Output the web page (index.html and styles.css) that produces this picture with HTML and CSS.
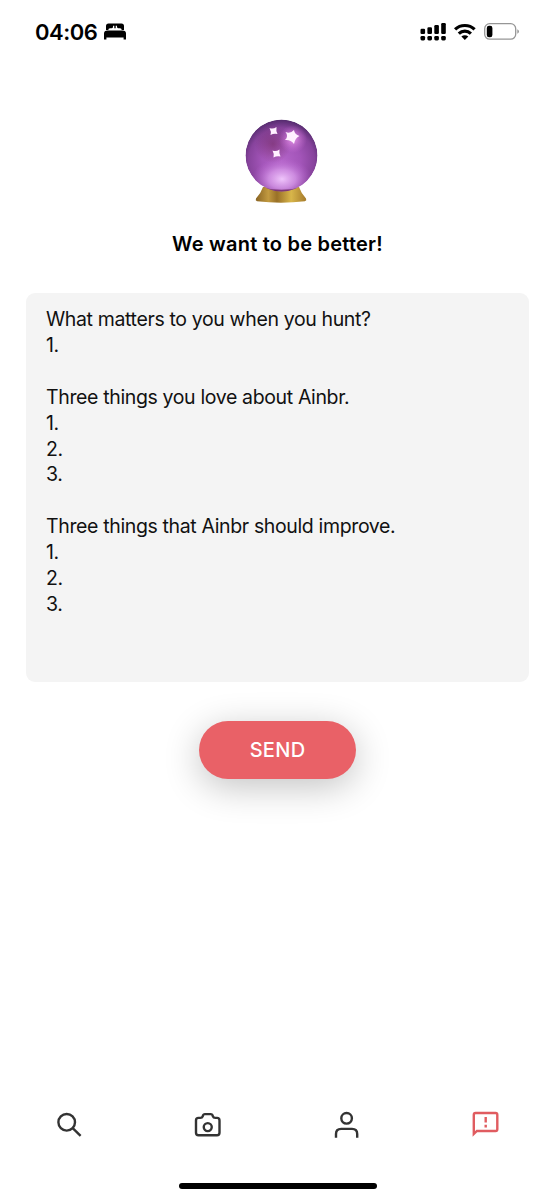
FILE: index.html
```html
<!DOCTYPE html>
<html lang="en">
<head>
<meta charset="utf-8">
<meta name="viewport" content="width=device-width, initial-scale=1">
<title>Feedback</title>
<link rel="stylesheet" href="styles.css">
</head>
<body>
<div class="screen">
  <header class="status">
    <div class="status-left">
      <span class="clock">04:06</span>
      <svg class="bed" width="24" height="20" viewBox="0 0 24 20">
        <path d="M3 8V4Q3 1.500 5.500 1.500H18.500Q21 1.500 21 4V8H18.700Q18.700 6.300 17 6.300H15.500Q14 6.300 14 4.800V3.800H12.700V6.300H11.300V3.800H10V4.800Q10 6.300 8.500 6.300H7Q5.300 6.300 5.300 8Z"/>
        <path d="M4.500 8.500H19.500Q23 8.500 23 11.500V17.500H20.600V15.500H3.400V17.500H1V11.500Q1 8.500 4.500 8.500Z"/>
      </svg>
    </div>
    <div class="status-right">
      <svg width="100" height="24" viewBox="0 0 100 24">
        <g>
          <rect x="0.500" y="8.700" width="4.600" height="5.200" rx="1.200"/>
          <rect x="7.400" y="7.200" width="4.600" height="6.700" rx="1.200"/>
          <rect x="14.300" y="5" width="4.600" height="8.900" rx="1.200"/>
          <rect x="21.200" y="3" width="4.600" height="10.900" rx="1.200"/>
          <rect x="0.500" y="15.900" width="4.600" height="4.600" rx="1.400"/>
          <rect x="7.400" y="15.900" width="4.600" height="4.600" rx="1.400"/>
          <rect x="14.300" y="15.900" width="4.600" height="4.600" rx="1.400"/>
          <rect x="21.200" y="15.900" width="4.600" height="4.600" rx="1.400"/>
        </g>
        <g fill="none" stroke="#000" stroke-width="3.200">
          <path d="M35.100 9.400C40.500 4.200 49.200 4.200 54.600 9.400"/>
          <path d="M38.800 13.600C42.300 10.300 47.400 10.300 50.900 13.600"/>
        </g>
        <path d="M41.400 16.500C43.400 14.800 46.300 14.800 48.300 16.500L44.850 20Z"/>
        <rect x="64.700" y="3.700" width="31" height="15.500" rx="5" fill="none" stroke="#969696" stroke-width="1.300"/>
        <path d="M97.300 9.200Q99 10 99 11.500T97.300 13.800Z" fill="#969696"/>
        <rect x="66.800" y="5.700" width="5.600" height="11.500" rx="2.200"/>
      </svg>
    </div>
  </header>

  <main class="content">
    <svg class="crystal" width="76" height="88" viewBox="0 0 76 88">
      <defs>
        <clipPath id="ball"><circle cx="37.500" cy="36.500" r="36"/></clipPath>
        <radialGradient id="glass" cx="50%" cy="58%" r="59%">
          <stop offset="0" stop-color="#b465c9"/>
          <stop offset="0.450" stop-color="#a355b9"/>
          <stop offset="0.780" stop-color="#87439c"/>
          <stop offset="1" stop-color="#4e2868"/>
        </radialGradient>
        <radialGradient id="glow" cx="50%" cy="50%" r="50%">
          <stop offset="0" stop-color="#efc5fb"/>
          <stop offset="0.450" stop-color="#d798e9" stop-opacity="0.800"/>
          <stop offset="1" stop-color="#b765d0" stop-opacity="0"/>
        </radialGradient>
        <radialGradient id="shade">
          <stop offset="0" stop-color="#68224f" stop-opacity="0.500"/>
          <stop offset="1" stop-color="#68224f" stop-opacity="0"/>
        </radialGradient>
        <radialGradient id="shine">
          <stop offset="0" stop-color="#ed9dec" stop-opacity="0.900"/>
          <stop offset="1" stop-color="#cf71d8" stop-opacity="0"/>
        </radialGradient>
        <linearGradient id="gold">
          <stop offset="0" stop-color="#886322"/>
          <stop offset="0.250" stop-color="#c29a40"/>
          <stop offset="0.420" stop-color="#997027"/>
          <stop offset="0.700" stop-color="#d8b64a"/>
          <stop offset="1" stop-color="#a57a2b"/>
        </linearGradient>
      </defs>
      <path d="M19 68Q17 74 12 79.500Q11 81.500 13 82.300Q37 85 61 82.300Q63 81.500 62 79.500Q57 74 55 68Z" fill="url(#gold)"/>
      <g clip-path="url(#ball)">
        <circle cx="37.500" cy="36.500" r="36" fill="url(#glass)"/>
        <ellipse cx="29" cy="25" rx="18" ry="19" fill="url(#shade)"/>
        <ellipse cx="38" cy="60" rx="30" ry="21" fill="url(#glow)"/>
        <circle cx="49" cy="20" r="14" fill="url(#shine)"/>
        <path d="M18 68.500Q37.500 73 57 68.500V74H18Z" fill="#6d2862" opacity="0.800"/>
      </g>
      <g fill="#fff0ff">
        <path d="M41.500 13Q46.500 15 50 11Q50.500 15.500 55.500 17Q51 19 50 25Q47 20.500 41 21Q45 17.500 41.500 13Z"/>
        <path d="M25.500 9Q29 10.500 32.500 8Q31.800 11.500 33.500 15Q30 14 26.500 16Q27.500 12.500 25.500 9Z"/>
        <path d="M28.500 31.500Q32 33 35.500 30.500Q34.800 34 36.500 37.500Q33 36.500 29.500 38.500Q30.500 35 28.500 31.500Z"/>
      </g>
    </svg>
    <h1 class="title">We want to be better!</h1>
    <div class="feedback">What matters to you when you hunt?
1.

Three things you love about Ainbr.
1.
2.
3.

Three things that Ainbr should improve.
1.
2.
3.</div>
    <button class="send" type="button">SEND</button>
  </main>

  <nav class="tabs">
    <a class="tab"><svg width="50" height="50" viewBox="0 0 50 50"><circle cx="22.700" cy="22.300" r="8.300"/><path d="M28.700 28.200L36.600 35.900"/></svg></a>
    <a class="tab"><svg width="50" height="50" viewBox="0 0 50 50"><path d="M15.500 17.900H17.300Q19.200 17.900 19.700 16.400L20.100 15.200Q20.500 14.100 21.800 14.100H27.800Q29.100 14.100 29.500 15.200L29.900 16.400Q30.400 17.900 32.300 17.900H34Q36.500 17.900 36.500 20.400V32.700Q36.500 35.200 34 35.200H15.500Q13 35.200 13 32.700V20.400Q13 17.900 15.500 17.900Z"/><circle cx="24.750" cy="27.100" r="4"/></svg></a>
    <a class="tab"><svg width="50" height="50" viewBox="0 0 50 50"><circle cx="24.600" cy="18.300" r="5.300"/><path d="M14 37.800V34.100Q14 28.900 19.200 28.900H30Q35.200 28.900 35.200 34.100V37.800"/></svg></a>
    <a class="tab active"><svg width="50" height="50" viewBox="0 0 50 50"><path d="M12.800 34V14.700Q12.800 13 14.500 13H34.600Q36.300 13 36.300 14.700V29.300Q36.300 31 34.600 31H15.900Z"/><path d="M24.700 17V22.500M24.700 24.700V27.400"/></svg></a>
  </nav>
  <div class="home"></div>
</div>
</body>
</html>
```
FILE: styles.css
```css
* {
  box-sizing: border-box;
}

body {
  margin: 0;
  background: #fff;
  color: #111;
  font-family: Inter, Roboto, sans-serif;
}

.screen {
  display: flex;
  flex-direction: column;
  height: 1200px;
  padding-bottom: 11px;
}

.status {
  display: flex;
  justify-content: space-between;
  height: 63px;
  padding: 0 35px;
}

.status-left,
.status-right {
  display: flex;
  align-items: center;
}

.status-left {
  gap: 6px;
}

.clock {
  color: #000;
  font-size: 22px;
  font-weight: 600;
  letter-spacing: -0.500px;
}

.status svg {
  display: block;
}

.content {
  display: flex;
  flex: 1;
  flex-direction: column;
  align-items: center;
  padding: 56px 26px 0;
}

.crystal {
  margin-left: 9px;
}

.title {
  margin: 24px 0 0;
  color: #000;
  font-size: 20px;
  font-weight: 600;
  letter-spacing: 0.230px;
  line-height: 26px;
}

.feedback {
  width: 100%;
  height: 389px;
  margin-top: 36px;
  padding: 14px 20px;
  border-radius: 9px;
  background: #f4f4f4;
  font-size: 19.500px;
  letter-spacing: -0.360px;
  line-height: 25.900px;
  white-space: pre-wrap;
}

.send {
  width: 157px;
  height: 58px;
  margin-top: 39px;
  padding: 0;
  border: 0;
  border-radius: 29px;
  background: #e96167;
  box-shadow: 0 8px 36px rgba(0, 0, 0, 0.240);
  color: #fff;
  font: 500 20px Inter, Roboto, sans-serif;
  letter-spacing: 0.300px;
}

.tabs {
  display: grid;
  grid-template-columns: repeat(4, 1fr);
  height: 83px;
}

.tab {
  display: flex;
  justify-content: center;
  color: #333;
}

.tab svg {
  fill: none;
  stroke: currentColor;
  stroke-width: 2.400;
}

.active {
  color: #e05c60;
}

.home {
  align-self: center;
  width: 198px;
  height: 6px;
  border-radius: 3px;
  background: #000;
}
```
